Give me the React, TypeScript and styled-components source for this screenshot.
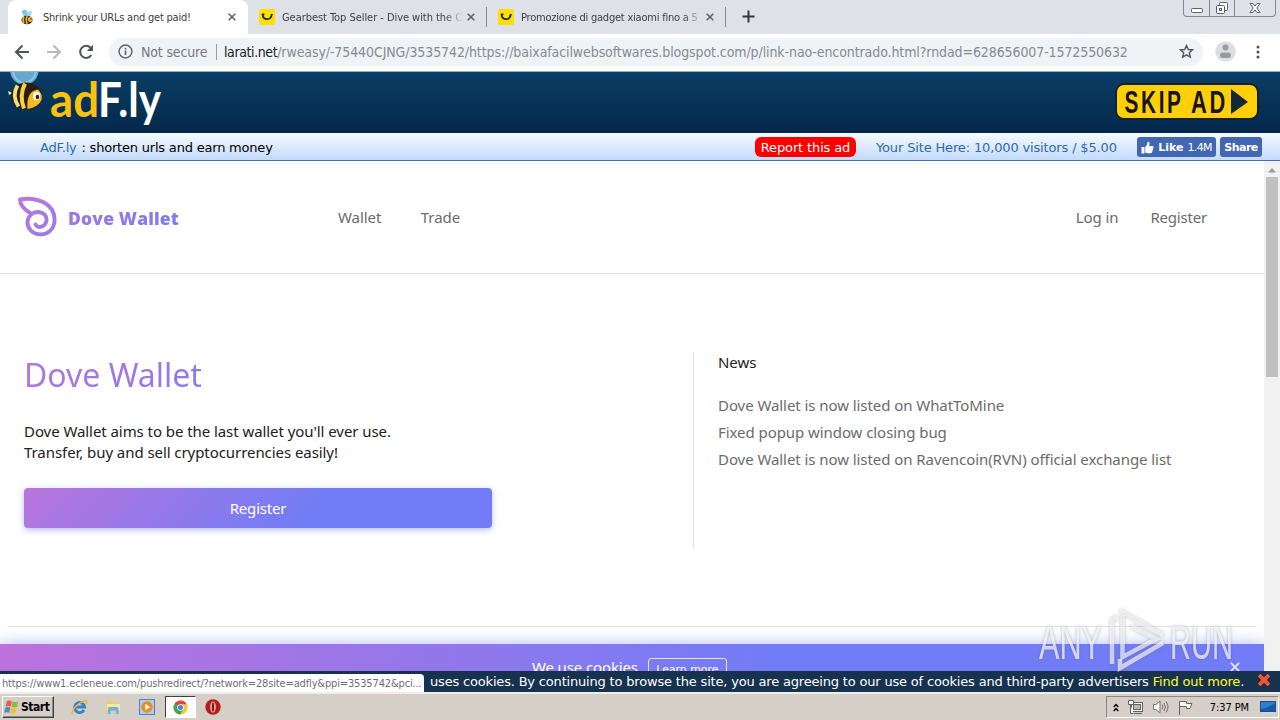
import React from 'react';
import styled, { createGlobalStyle } from 'styled-components';

const ui = `"DejaVu Sans Condensed", "DejaVu Sans", sans-serif`;
const wide = `"DejaVu Sans", sans-serif`;
const site = `"Noto Sans", "Open Sans", sans-serif`;

const Global = createGlobalStyle`
  * { box-sizing: border-box; }
  body { margin: 0; overflow: hidden; background: #fff; }
  svg { display: block; flex: none; }
`;

const Screen = styled.div`
  position: relative;
  display: flex;
  flex-direction: column;
  width: 1280px;
  height: 720px;
  overflow: hidden;
  background: #fff;
  font-family: ${ui};
`;

const Label = styled.span<{ $track?: number }>`
  white-space: pre;
  letter-spacing: ${p => p.$track ?? 0}px;
`;

/* Browser chrome */
const TabStrip = styled.div`
  display: flex;
  height: 34px;
  flex: none;
  background: #dee1e8;
`;
const Tab = styled.div<{ $active?: boolean; $width: number }>`
  display: flex;
  align-items: center;
  width: ${p => p.$width}px;
  height: 34px;
  padding: 0 ${p => (p.$active ? 12 : 11)}px;
  font-size: 11px;
  color: #3c4043;
  background: ${p => (p.$active ? '#fff' : 'transparent')};
  border-radius: ${p => (p.$active ? '8px 8px 0 0' : '0')};
  margin-left: ${p => (p.$active ? '8px' : '0')};
`;
const TabTitle = styled.div<{ $fade?: boolean; $track: number }>`
  width: 180px;
  margin-left: 7px;
  padding-top: 1px;
  overflow: hidden;
  white-space: pre;
  letter-spacing: ${p => p.$track}px;
  ${p => p.$fade && 'mask-image: linear-gradient(90deg, #000 162px, transparent 182px);'}
`;
const TabClose = styled.div`
  margin-left: auto;
`;
const TabDivider = styled.div`
  width: 1px;
  height: 20px;
  margin-top: 7px;
  background: #888b91;
`;
const NewTab = styled.div`
  padding: 10px 0 0 16px;
`;
const WindowButtons = styled.div`
  display: flex;
  width: 93px;
  height: 17px;
  margin: 0 4px 0 auto;
  border: 1px solid #858890;
  border-top: 0;
  border-radius: 0 0 4px 4px;
`;
const WindowButton = styled.div<{ $width: number }>`
  display: flex;
  justify-content: center;
  width: ${p => p.$width}px;
  & + & { border-left: 1px solid #858890; }
`;
const Toolbar = styled.div`
  display: flex;
  align-items: center;
  height: 38px;
  flex: none;
  padding: 0 0 2px 14px;
  background: #fff;
  border-bottom: 1px solid #93b3c2;
`;
const NavIcons = styled.div`
  display: flex;
  gap: 16px;
  width: 95px;
`;
const Address = styled.div`
  display: flex;
  align-items: center;
  width: 1094px;
  height: 28px;
  padding: 0 9px 0 9px;
  border-radius: 14px;
  background: #f0f3f6;
  font-size: 14px;
  color: #858a90;
`;
const Security = styled.div`
  width: 75px;
  margin-left: 8px;
  color: #75797e;
`;
const AddressDivider = styled.div`
  width: 1px;
  height: 16px;
  margin-right: 7px;
  background: #9a9da1;
`;
const Host = styled.span`
  color: #202124;
  letter-spacing: -0.4px;
`;
const Star = styled.div`
  margin-left: auto;
`;
const ToolbarEnd = styled.div`
  display: flex;
  align-items: center;
  gap: 20px;
  margin-left: 12px;
`;

/* Ad frame */
const AdHeader = styled.div`
  display: flex;
  justify-content: space-between;
  height: 61px;
  flex: none;
  padding: 0 21px 0 6px;
  background: linear-gradient(#0a3e66, #04284b);
`;
const SkipWrap = styled.div`
  padding-top: 11px;
`;
const AdBar = styled.div`
  display: flex;
  align-items: center;
  height: 28px;
  flex: none;
  padding: 1px 18px 0 40px;
  background: linear-gradient(#f6faff, #c3dafa);
  border-bottom: 1px solid #3f6cb0;
  font: 13px ${wide};
  color: #000;
`;
const AdflyLink = styled.span`
  margin-right: 1px;
  color: #2b6ca8;
`;
const Report = styled.div`
  width: 101px;
  height: 20px;
  margin-left: auto;
  border-radius: 6px;
  background: #f00;
  color: #fff;
  line-height: 21px;
  text-align: center;
`;
const SiteOffer = styled.div`
  width: 242px;
  margin: 0 19px 0 20px;
  color: #2b6ca8;
`;
const FbButton = styled.div<{ $width: number }>`
  display: flex;
  align-items: center;
  justify-content: center;
  gap: 4px;
  width: ${p => p.$width}px;
  height: 20px;
  & + & { margin-left: 4px; }
  border-radius: 3px;
  background: #4267b2;
  color: #fff;
  font-size: 11px;
`;

/* Page */
const Viewport = styled.div`
  display: flex;
  height: 510px;
  flex: none;
`;
const Page = styled.div`
  display: flex;
  flex-direction: column;
  width: 1264px;
  height: 510px;
  overflow: hidden;
  background: #fff;
  font: 15px/21px ${site};
  letter-spacing: -0.065px;
  color: #212121;
`;
const SiteNav = styled.div`
  display: flex;
  align-items: center;
  height: 113px;
  flex: none;
  padding: 0 57px 0 16px;
  border-bottom: 1px solid #e2e2e2;
  color: #6b6b6b;
`;
const Brand = styled.div`
  display: flex;
  align-items: center;
  gap: 10px;
  width: 322px;
`;
const BrandName = styled.div`
  padding-top: 1px;
  font: 800 17.5px/24px "Open Sans", sans-serif;
  letter-spacing: 0.15px;
  background: linear-gradient(90deg, #9c77e4, #7f7bf2);
  background-clip: text;
  color: transparent;
  white-space: nowrap;
`;
const NavLinks = styled.div<{ $gap: number }>`
  display: flex;
  gap: ${p => p.$gap}px;
`;
const Account = styled(NavLinks)`
  margin-left: auto;
`;
const Hero = styled.div`
  display: flex;
  height: 353px;
  flex: none;
  margin: 0 8px;
  padding: 78px 0 0 16px;
  border-bottom: 1px solid #e2e2e2;
`;
const Intro = styled.div`
  width: 669px;
`;
const Title = styled.h1`
  width: 470px;
  margin: 0 0 23px;
  font: 400 32px/46px ${site};
  letter-spacing: 0;
  background: linear-gradient(135deg, #b577da, #727cf5 66%);
  background-clip: text;
  color: transparent;
`;
const RegisterButton = styled.div`
  width: 468px;
  height: 40px;
  margin-top: 25px;
  border-radius: 4px;
  background: linear-gradient(135deg, #b975dc, #717cf6 62%);
  box-shadow: 0 2px 6px rgba(113, 124, 246, 0.5);
  color: #fff;
  line-height: 41px;
  text-align: center;
`;
const News = styled.div`
  height: 196px;
  padding-left: 24px;
  border-left: 1px solid #e2e2e2;
`;
const NewsTitle = styled.div`
  margin-bottom: 19px;
`;
const NewsItem = styled.div`
  line-height: 27px;
  color: #6b6b6b;
`;
const CookieBanner = styled.div`
  display: flex;
  align-items: flex-start;
  height: 44px;
  flex: none;
  margin-top: 17px;
  padding: 13px 24px 0 532px;
  background: linear-gradient(100deg, #bd72dc, #717cf6 62%);
  box-shadow: 0 0 16px rgba(113, 124, 246, 0.55);
  color: #fff;
`;
const LearnMore = styled.div`
  width: 79px;
  height: 24px;
  margin: 1px 0 0 10px;
  border: 1px solid #e4e2fb;
  border-radius: 3px;
  font: 11px/21px ${wide};
  text-align: center;
`;
const CookieClose = styled.div`
  margin: 5px 0 0 auto;
`;
const Scrollbar = styled.div`
  display: flex;
  flex-direction: column;
  align-items: center;
  width: 16px;
  height: 510px;
  background: #f1f1f1;
`;
const ScrollThumb = styled.div`
  width: 12px;
  height: 200px;
  background: #c1c1c1;
`;

const Notice = styled.div`
  display: flex;
  align-items: center;
  height: 21px;
  flex: none;
  background: #16324f;
  color: #fff;
  font: 13px ${wide};
`;
const StatusUrl = styled.div`
  width: 424px;
  height: 18px;
  margin: 3px 6px 0 0;
  padding-left: 2px;
  border-top-right-radius: 4px;
  background: #fff;
  color: #6b6f75;
  font: 11px/19px ${ui};
`;
const Yellow = styled.span`
  color: #ff2;
`;
const NoticeClose = styled.div`
  margin-left: auto;
  padding: 0 10px 3px 0;
`;

/* Taskbar */
const Taskbar = styled.div`
  display: flex;
  align-items: center;
  height: 28px;
  flex: none;
  padding-left: 2px;
  border-top: 2px solid #f0eeea;
  background: #d5cfc7;
  color: #000;
`;
const StartButton = styled.div`
  display: flex;
  align-items: center;
  gap: 1px;
  width: 52px;
  height: 22px;
  padding-left: 1px;
  border: 1px solid #fff;
  border-right-color: #404040;
  border-bottom-color: #404040;
  box-shadow: inset -1px -1px 0 #888;
  font: bold 12px ${ui};
`;
const QuickLaunch = styled.div`
  display: flex;
  align-items: center;
  margin-left: 9px;
`;
const QuickItem = styled.div<{ $active?: boolean }>`
  display: flex;
  align-items: center;
  justify-content: center;
  width: ${p => (p.$active ? 31 : 33.5)}px;
  height: 22px;
  border: 1px solid transparent;
  ${p => p.$active && 'background: #fff; border-color: #404040 #fff #fff #404040; margin: 0 1px;'}
`;
const Tray = styled.div`
  display: flex;
  align-items: center;
  width: 173px;
  height: 22px;
  margin: 0 1px 0 auto;
  padding: 0 2px 0 6px;
  border: 1px solid #888;
  border-right-color: #fff;
  border-bottom-color: #fff;
  font-size: 11px;
`;
const TrayIcons = styled.div`
  display: flex;
  align-items: center;
  gap: 8px;
`;
const Clock = styled.div`
  margin: 0 11px 0 auto;
`;
const Watermark = styled.div`
  position: absolute;
  left: 1036px;
  top: 606px;
  filter: drop-shadow(0 0 1.5px rgba(90, 90, 110, 0.6));
`;

const Cross = ({ size = 8, color = '#5f6368', w = 1.6 }: { size?: number; color?: string; w?: number }) => (
  <svg width={size} height={size} viewBox="0 0 8 8">
    <path d="M.7.7l6.6 6.6M7.3.7L.7 7.3" stroke={color} strokeWidth={w} />
  </svg>
);

const BeeIcon = () => (
  <svg width="16" height="16" viewBox="0 0 16 16">
    <ellipse cx="5" cy="4" rx="2.6" ry="3.6" fill="#7cc3e6" transform="rotate(-25 5 4)" />
    <ellipse cx="9.5" cy="4.6" rx="2" ry="3.2" fill="#a5d9f0" transform="rotate(20 9.5 4.6)" />
    <ellipse cx="7" cy="11" rx="5.6" ry="4.2" fill="#3a2c12" />
    <path d="M4 8q-2 3 0 6M7.2 7q-2 4 0 8" stroke="#e8b93a" strokeWidth="1.5" fill="none" />
    <circle cx="10.2" cy="10.5" r="2.4" fill="#f0bd32" />
    <circle cx="11" cy="10" r=".8" fill="#222" />
  </svg>
);
const GearbestIcon = () => (
  <svg width="16" height="16" viewBox="0 0 16 16">
    <rect width="16" height="16" rx="1.5" fill="#ffdf00" />
    <path d="M2.8 5.3h2.6M3.6 5.6q.4 4.6 4.6 4.6 4 0 4.6-5.2" stroke="#222" strokeWidth="1.8" fill="none" />
  </svg>
);

const AdflyLogo = () => (
  <svg width="160" height="61" viewBox="6 72 160 61">
    <path d="M10 70q0 11 12 15 15 0 17-15z" fill="#64a9cb" />
    <path d="M13 72q1 7 9 11M36 72q-2 9-11 11" stroke="#8cc8e2" strokeWidth="2" fill="none" />
    <path d="M8 91l5 2-4 2z" fill="#e9dfb0" />
    <ellipse cx="26.5" cy="96" rx="15.5" ry="13.5" fill="#2b1d12" />
    <path d="M17.500 85.500q-6 10 1 21" stroke="#f3e07a" strokeWidth="3.800" fill="none" />
    <path d="M25 83.500q-6 12-1 25" stroke="#f5d33c" strokeWidth="4" fill="none" />
    <path d="M27.500 109q-1.500-18 10.500-19.500 5 5 3.500 10.500-3 7-14 9z" fill="#f7bb22" />
    <ellipse cx="36.5" cy="96" rx="3.4" ry="4.200" fill="#fff" />
    <ellipse cx="37.4" cy="97" rx="1.7" ry="2.3" fill="#281a22" />
    <g fontFamily="Lato, sans-serif" fontWeight="700" fontSize="48">
      <text x="50" y="116.500" fill="#f9c211" textLength="49" lengthAdjust="spacingAndGlyphs">ad</text>
      <text x="98" y="116.500" fill="#fff" textLength="63" lengthAdjust="spacingAndGlyphs">F.ly</text>
    </g>
  </svg>
);

const SkipAd = () => (
  <svg width="144" height="37" viewBox="0 0 144 37">
    <rect x="1" y="1" width="142" height="35" rx="8" fill="#ffcf08" stroke="#14202c" strokeWidth="2" />
    <g fontFamily="Liberation Sans Narrow, Liberation Sans, sans-serif" fontWeight="700" fontSize="32" fill="#141414">
      <text x="9.500" y="30" textLength="59" lengthAdjust="spacingAndGlyphs" letterSpacing="4">SKIP</text>
      <text x="76" y="30" textLength="37" lengthAdjust="spacingAndGlyphs" letterSpacing="4">AD</text>
    </g>
    <path d="M116 6l17 13-17 12z" fill="#12283a" />
  </svg>
);

const DoveLogo = () => (
  <svg width="42" height="42" viewBox="16 196 42 42">
    <defs>
      <linearGradient id="dove" x1="0" x2="1" y1="0" y2="1">
        <stop stopColor="#b877de" />
        <stop offset="1" stopColor="#9a7be8" />
      </linearGradient>
    </defs>
    <path
      d="M31 213.5C25 210 20 205 20 199.500C28 198 37 199 44 202.500C52 207 55 213 54.500 221C54 230 47 234.500 40.500 234.500C33 234.500 27.500 229 27.500 222.500C27.500 216 33 211.500 38.500 212C44 212.500 47 216 46.500 220.500C46 225 42.500 227 39 227Q36.500 226.500 35.500 224.500"
      fill="none" stroke="url(#dove)" strokeWidth="3.9" strokeLinejoin="round" strokeLinecap="round"
    />
  </svg>
);

export default function App() {
  return (
    <Screen>
      <Global />
      <TabStrip>
        <Tab $active $width={240}>
          <BeeIcon />
          <TabTitle $track={-0.22}>Shrink your URLs and get paid!</TabTitle>
          <TabClose><Cross /></TabClose>
        </Tab>
        <Tab $width={238}>
          <GearbestIcon />
          <TabTitle $fade $track={-0.05}>Gearbest Top Seller - Dive with the C</TabTitle>
          <TabClose><Cross /></TabClose>
        </Tab>
        <TabDivider />
        <Tab $width={238}>
          <GearbestIcon />
          <TabTitle $fade $track={-0.22}>Promozione di gadget xiaomi fino a 5</TabTitle>
          <TabClose><Cross /></TabClose>
        </Tab>
        <TabDivider />
        <NewTab>
          <svg width="13" height="13"><path d="M6.500 .5v12M.5 6.500h12" stroke="#34373b" strokeWidth="2" /></svg>
        </NewTab>
        <WindowButtons>
          <WindowButton $width={25}>
            <svg width="14" height="16"><rect x="1.500" y="8.500" width="11" height="4" rx="1" fill="#fff" stroke="#5d6066" /></svg>
          </WindowButton>
          <WindowButton $width={25}>
            <svg width="14" height="16" fill="#fff" stroke="#5d6066">
              <rect x="4.500" y="2.500" width="8" height="8" rx="1" />
              <rect x="1.500" y="5.500" width="8" height="8" rx="1" />
              <rect x="4.500" y="8.500" width="2" height="2" />
            </svg>
          </WindowButton>
          <WindowButton $width={41}>
            <svg width="14" height="16" fill="#fff" stroke="#5d6066">
              <path d="M2 3.500h3l2 2.500 2-2.500h3L8.800 8l3.200 4.500H9L7 10l-2 2.500H2L5.200 8z" />
            </svg>
          </WindowButton>
        </WindowButtons>
      </TabStrip>

      <Toolbar>
        <NavIcons>
          <svg width="16" height="16" fill="none" stroke="#505357" strokeWidth="2"><path d="M15 8H2M8.500 1.500L2 8l6.500 6.500" /></svg>
          <svg width="16" height="16" fill="none" stroke="#b7b9bc" strokeWidth="2"><path d="M1 8h13M7.500 1.500L14 8l-6.500 6.500" /></svg>
          <svg width="16" height="16"><path d="M13.300 11a6 6 0 1 1-.8-7.300" fill="none" stroke="#505357" strokeWidth="2" /><path d="M15 .8V7H8.800z" fill="#505357" /></svg>
        </NavIcons>
        <Address>
          <svg width="15" height="15" fill="none" stroke="#5f6368">
            <circle cx="7.500" cy="7.500" r="6.400" strokeWidth="1.500" />
            <path d="M7.500 6.600v4.400M7.500 3.800v1.700" strokeWidth="1.600" />
          </svg>
          <Security><Label $track={-0.15}>Not secure</Label></Security>
          <AddressDivider />
          <Label $track={-0.095}><Host>larati.net</Host>/rweasy/-75440CJNG/3535742/https://baixafacilwebsoftwares.blogspot.com/p/link-nao-encontrado.html?rndad=628656007-1572550632</Label>
          <Star>
            <svg width="15" height="15" viewBox="0 0 15 15">
              <path d="M7.500 1.500l1.800 4 4.300.4-3.300 2.900 1 4.300-3.800-2.300-3.800 2.300 1-4.300L1.400 5.900l4.300-.4z" fill="none" stroke="#505357" strokeWidth="1.400" />
            </svg>
          </Star>
        </Address>
        <ToolbarEnd>
          <svg width="21" height="21">
            <circle cx="10.500" cy="10.500" r="10.200" fill="#dddedf" />
            <circle cx="10.500" cy="6.500" r="3" fill="#999b9d" />
            <rect x="5" y="11.500" width="11" height="5.500" rx="2.700" fill="#999b9d" />
          </svg>
          <svg width="4" height="14" fill="#505357"><circle cx="2" cy="2" r="1.500" /><circle cx="2" cy="7" r="1.500" /><circle cx="2" cy="12" r="1.500" /></svg>
        </ToolbarEnd>
      </Toolbar>

      <AdHeader>
        <AdflyLogo />
        <SkipWrap><SkipAd /></SkipWrap>
      </AdHeader>

      <AdBar>
        <Label $track={-0.2}><AdflyLink>AdF.ly</AdflyLink> : shorten urls and earn money</Label>
        <Report><Label $track={-0.13}>Report this ad</Label></Report>
        <SiteOffer><Label $track={-0.15}>Your Site Here: 10,000 visitors / $5.00</Label></SiteOffer>
        <FbButton $width={79}>
          <svg width="13" height="13" viewBox="0 0 13 13" fill="#fff">
            <path d="M.5 6h3v6.500h-3zM4.200 6.200Q6.500 4 6.600.8q2-.3 2 2L8 5h3.600q1.300.3.900 1.600l-1.400 4.700q-.4 1-1.500 1H6l-1.800-.8z" />
          </svg>
          <b>Like</b>
          <Label $track={-0.7}>1.4M</Label>
        </FbButton>
        <FbButton $width={42}><b><Label $track={-0.5}>Share</Label></b></FbButton>
      </AdBar>

      <Viewport>
        <Page>
          <SiteNav>
            <Brand>
              <DoveLogo />
              <BrandName>Dove Wallet</BrandName>
            </Brand>
            <NavLinks $gap={39.500}><span>Wallet</span><span>Trade</span></NavLinks>
            <Account $gap={32}><span>Log in</span><Label $track={-0.2}>Register</Label></Account>
          </SiteNav>
          <Hero>
            <Intro>
              <Title>Dove Wallet</Title>
              <div>Dove Wallet aims to be the last wallet you'll ever use.</div>
              <div>Transfer, buy and sell cryptocurrencies easily!</div>
              <RegisterButton><Label $track={-0.2}>Register</Label></RegisterButton>
            </Intro>
            <News>
              <NewsTitle>News</NewsTitle>
              <NewsItem>Dove Wallet is now listed on WhatToMine</NewsItem>
              <NewsItem>Fixed popup window closing bug</NewsItem>
              <NewsItem>Dove Wallet is now listed on Ravencoin(RVN) official exchange list</NewsItem>
            </News>
          </Hero>
          <CookieBanner>
            <Label $track={-0.13}>We use cookies</Label>
            <LearnMore>Learn more</LearnMore>
            <CookieClose><Cross size={10} color="#e9e9ff" w={1.3} /></CookieClose>
          </CookieBanner>
        </Page>
        <Scrollbar>
          <svg width="16" height="16"><path d="M4 11.500l4-4.500 4 4.500z" fill="#9b9b9b" /></svg>
          <ScrollThumb />
        </Scrollbar>
      </Viewport>

      <Notice>
        <StatusUrl><Label $track={-0.15}>https://www1.ecleneue.com/pushredirect/?network=28site=adfly&ppi=3535742&pci...</Label></StatusUrl>
        <Label $track={-0.18}>uses cookies. By continuing to browse the site, you are agreeing to our use of cookies and third-party advertisers <Yellow>Find out more</Yellow>.</Label>
        <NoticeClose><Cross size={12} color="#ee5536" w={2.500} /></NoticeClose>
      </Notice>

      <Taskbar>
        <StartButton>
          <svg width="16" height="16" viewBox="0 0 15 15">
            <path d="M2.500 2q2.500-1.200 4.800 0l-1 5q-2.200-1-4.800 0z" fill="#e8603a" />
            <path d="M8 2.300q2.500 1 5.500 0l-1.300 5q-2.500 1-5.200 0z" fill="#8cba3e" />
            <path d="M1.300 7.900q2.500-1 4.800 0l-1.200 5q-2-1-4.700 0z" fill="#4c8ad8" />
            <path d="M6.800 8.200q2.500 1 5.200 0l-1.300 5q-2.500 1-5.200 0z" fill="#f4c030" />
          </svg>
          <Label $track={-0.45}>Start</Label>
        </StartButton>
        <QuickLaunch>
          <QuickItem>
            <svg width="17" height="17" viewBox="0 0 17 17" fill="none">
              <path d="M13 11a5 5 0 1 1 .6-3H5" stroke="#2f83d0" strokeWidth="2.800" />
              <path d="M2.500 14.500Q-1 15 3.500 9T15.500 1.500q1.500 1-1 4" stroke="#e7b93c" strokeWidth="1.300" />
            </svg>
          </QuickItem>
          <QuickItem>
            <svg width="16" height="16" viewBox="0 0 16 16">
              <path d="M1 2h5l1 1.500h7V13H1z" fill="#e9cf75" />
              <path d="M2 5h13v6H2z" fill="#f6e7a5" />
              <path d="M3 15V9.500q0-1.500 1.500-1.500h7.500q1.500 0 1.500 1.500V15H11v-3.500H5.500V15z" fill="#69b2de" />
            </svg>
          </QuickItem>
          <QuickItem>
            <svg width="16" height="16" viewBox="0 0 16 16">
              <rect x=".5" y=".5" width="15" height="15" fill="#a9cdec" stroke="#4d86bd" />
              <circle cx="8" cy="8" r="5.700" fill="#f08a1d" />
              <path d="M6.300 4.800l5 3.200-5 3.200z" fill="#fff" />
            </svg>
          </QuickItem>
          <QuickItem $active>
            <svg width="15" height="15" viewBox="0 0 16 16">
              <circle cx="8" cy="8" r="7.500" fill="#f6c834" />
              <path d="M8 8L1.500 4.300A7.500 7.500 0 0 1 14.600 4.500H8z" fill="#df4537" />
              <path d="M8 8L1.500 4.300A7.500 7.500 0 0 0 7.600 15.500L11 9.700z" fill="#41a35a" />
              <circle cx="8" cy="8" r="3.500" fill="#fff" />
              <circle cx="8" cy="8" r="2.700" fill="#4484ea" />
            </svg>
          </QuickItem>
          <QuickItem>
            <svg width="16" height="16" viewBox="0 0 16 16">
              <circle cx="8" cy="8" r="7.700" fill="#b71d1d" />
              <ellipse cx="8" cy="8" rx="2.700" ry="5.500" fill="#f1d7d3" />
              <ellipse cx="8" cy="8" rx="1.300" ry="4.800" fill="#8d1212" />
            </svg>
          </QuickItem>
        </QuickLaunch>
        <Tray>
          <TrayIcons>
            <svg width="6" height="9" fill="none" stroke="#000" strokeWidth="1.300"><path d="M.7 4L3 1.500 5.300 4M.7 8L3 5.500 5.300 8" /></svg>
            <svg width="17" height="16" fill="#f5f5f5" stroke="#66625c">
              <rect x="4.500" y="3.500" width="11" height="9" />
              <rect x="6.500" y="5.500" width="7" height="5" fill="#bdb8b0" />
              <path d="M7 14.500h8M1.500 1.500h5v4h-5zM3.500 5.500v9h3" />
            </svg>
            <svg width="17" height="14" fill="none" stroke="#77736d">
              <path d="M1.500 4.500h2.500l4-3.500v12l-4-3.500H1.500z" fill="#f5f5f5" />
              <path d="M10 4.500q2 2.500 0 5M12 3q3 4 0 8M14 1.500q4 5.500 0 11" />
            </svg>
            <svg width="17" height="15" fill="#f8f8f8" stroke="#66625c">
              <path d="M2.500 15V1.500h7v2h5.500l-2 5H9.500v-2h-7" />
            </svg>
          </TrayIcons>
          <Clock><Label $track={-0.1}>7:37 PM</Label></Clock>
          <svg width="16" height="14"><rect x=".5" y="1.500" width="15" height="10" fill="#2f7fd0" stroke="#1d4f88" /><path d="M1 9q7-1 14-6v8H1z" fill="#1b57a8" /><path d="M3 13h10" stroke="#cfe2f5" /></svg>
        </Tray>
      </Taskbar>

      <Watermark>
        <svg width="200" height="68" viewBox="0 0 200 68">
          <g fontFamily="Liberation Sans Narrow, Liberation Sans, sans-serif" fontSize="49" fill="#fff" fillOpacity=".7">
            <text x="3" y="53" textLength="63" lengthAdjust="spacingAndGlyphs">ANY</text>
            <text x="134" y="53" textLength="63" lengthAdjust="spacingAndGlyphs">RUN</text>
          </g>
          <g fill="none" stroke="#fff" strokeOpacity=".65" strokeWidth="4.500">
            <path d="M81 11l-5 3v44" />
            <path d="M95 20l25 13-33.500 18V6L127 29" />
            <path d="M84 53v9l43-25" />
          </g>
        </svg>
      </Watermark>
    </Screen>
  );
}
